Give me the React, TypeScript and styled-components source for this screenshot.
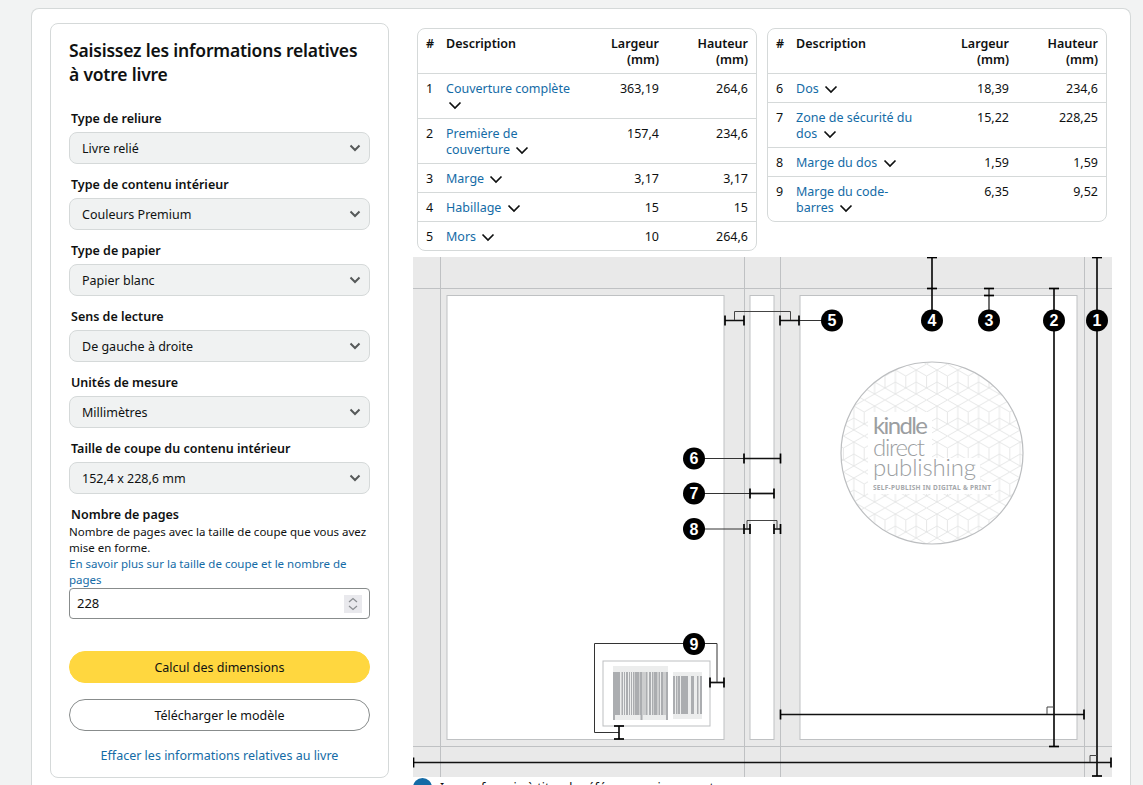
import React from 'react';
import styled, { createGlobalStyle } from 'styled-components';

const GlobalStyle = createGlobalStyle`
  html, body {
    margin: 0;
    height: 785px;
    overflow: hidden;
    background: #f2f3f3;
    color: #0f1111;
    font-family: "Noto Sans", "Liberation Sans", Arial, sans-serif;
    font-size: 13px;
  }
`;

// Page
const Card = styled.main`
  display: flex;
  align-items: flex-start;
  box-sizing: border-box;
  width: 1100px;
  height: 777px;
  margin: 8px 0 0 31px;
  padding: 14px 0 0 18px;
  background: #fff;
  border: 1px solid #d5d9d9;
  border-bottom: 0;
  border-radius: 8px 8px 0 0;
  overflow: hidden;
`;

// Form panel
const Panel = styled.section`
  box-sizing: border-box;
  flex: none;
  width: 339px;
  height: 755px;
  padding: 14px 18px 0;
  border: 1px solid #d5d9d9;
  border-radius: 8px;
`;

const Title = styled.h1`
  margin: 0 0 23px;
  font-size: 17.5px;
  line-height: 24px;
  font-weight: 600;
  letter-spacing: -0.2px;
`;

const Field = styled.div`
  margin-bottom: 11px;
`;

const Label = styled.label`
  display: block;
  margin: 0 0 4px 2px;
  font-size: 12.5px;
  line-height: 19px;
  font-weight: 600;
`;

const SelectBox = styled.div`
  display: flex;
  align-items: center;
  justify-content: space-between;
  box-sizing: border-box;
  height: 32px;
  padding: 0 8px 0 12px;
  background: #f0f2f2;
  border: 1px solid #d5d9d9;
  border-radius: 8px;
  font-size: 12.5px;
`;

const Help = styled.p`
  margin: -4px 0 0;
  font-size: 11.5px;
  line-height: 16px;
`;

const HelpLink = styled.a`
  display: block;
  color: #146ba6;
`;

const NumberBox = styled.div`
  position: relative;
  box-sizing: border-box;
  height: 31px;
  padding-left: 7px;
  border: 1px solid #888c8c;
  border-radius: 4px;
  font-size: 13px;
  line-height: 29px;
`;

const Spin = styled.span`
  position: absolute;
  top: 6px;
  right: 7px;
  display: flex;
  width: 18px;
  height: 18px;
  background: #e9e9ed;
`;

const Actions = styled.div`
  margin-top: 32px;
`;

const Button = styled.button<{ $primary?: boolean }>`
  display: block;
  box-sizing: border-box;
  width: 301px;
  height: 32px;
  margin: 0 0 16px;
  background: ${(p) => (p.$primary ? '#ffd73f' : '#fff')};
  border: 1px solid ${(p) => (p.$primary ? '#ffd73f' : '#888c8c')};
  border-radius: 16px;
  color: #0f1111;
  font: inherit;
  font-size: 12.5px;
`;

const ClearLink = styled.a`
  display: block;
  margin-top: 17px;
  text-align: center;
  color: #146ba6;
  font-size: 12.5px;
  line-height: 16px;
`;

// Right column
const Content = styled.section`
  flex: none;
  width: 699px;
  margin-left: 24px;
`;

const Tables = styled.div`
  display: flex;
  align-items: flex-start;
  gap: 10px;
  height: 227px;
  padding: 5px 0 0 4px;
  margin-bottom: 7px;
  box-sizing: border-box;
`;

const Wrap = styled.div`
  flex: none;
  width: 340px;
  box-sizing: border-box;
  border: 1px solid #d5d9d9;
  border-radius: 8px;
  overflow: hidden;
`;

const Table = styled.table`
  width: 100%;
  table-layout: fixed;
  border-collapse: collapse;
  font-size: 12.5px;
  line-height: 16px;

  tbody tr > * {
    border-top: 1px solid #d5d9d9;
  }
`;

const Th = styled.th<{ $w: number; $right?: boolean; $flush?: boolean }>`
  box-sizing: border-box;
  width: ${(p) => p.$w}px;
  padding: 7px 8px 5px ${(p) => (p.$flush ? 0 : 8)}px;
  text-align: ${(p) => (p.$right ? 'right' : 'left')};
  vertical-align: top;
  font-weight: 600;
`;

const Td = styled.td<{ $right?: boolean }>`
  padding: 7px 8px 5px;
  text-align: ${(p) => (p.$right ? 'right' : 'left')};
  vertical-align: top;
`;

const DescCell = styled(Td)`
  padding-left: 0;
  padding-right: 0;
`;

const RowLink = styled.a`
  color: #146ba6;
`;

const Tail = styled.span`
  white-space: nowrap;
`;

const Chevron = styled.svg`
  display: inline-block;
  width: 14px;
  height: 9px;
  margin-left: 2px;
  vertical-align: -1px;
`;

const Diagram = styled.svg`
  display: block;
  width: 699px;
  height: 520px;
`;

const Note = styled.div`
  display: flex;
  align-items: flex-start;
  gap: 8px;
  margin-top: 1px;
  font-size: 12.5px;
  line-height: 16px;
`;

const NoteText = styled.span`
  padding-top: 2px;
`;

const InfoDot = styled.span`
  flex: none;
  width: 19px;
  height: 19px;
  border-radius: 50%;
  background: #146ba6;
`;

const Badge = styled.text`
  fill: #fff;
  font-family: "Liberation Sans", Arial, sans-serif;
  font-size: 16px;
  font-weight: 700;
  text-anchor: middle;
`;

const LogoWord = styled.text`
  fill: #9b9ea1;
  font-family: Lato, "Noto Sans", sans-serif;
  font-size: 24px;
  font-weight: 300;
`;

const LogoBold = styled(LogoWord)`
  font-weight: 400;
`;

const LogoTag = styled.text`
  fill: #a5a8ab;
  font-family: "Noto Sans", sans-serif;
  font-size: 6.5px;
  font-weight: 700;
`;

// Data
type Row = { n: number; text: string; tail?: string; w: string; h: string };

const leftRows: Row[] = [
  { n: 1, text: 'Couverture complète', w: '363,19', h: '264,6' },
  { n: 2, text: 'Première de couverture', w: '157,4', h: '234,6' },
  { n: 3, text: 'Marge', w: '3,17', h: '3,17' },
  { n: 4, text: 'Habillage', w: '15', h: '15' },
  { n: 5, text: 'Mors', w: '10', h: '264,6' },
];

const rightRows: Row[] = [
  { n: 6, text: 'Dos', w: '18,39', h: '234,6' },
  { n: 7, text: 'Zone de sécurité du dos', w: '15,22', h: '228,25' },
  { n: 8, text: 'Marge du dos', w: '1,59', h: '1,59' },
  { n: 9, text: 'Marge du code-', tail: 'barres', w: '6,35', h: '9,52' },
];

const selects = [
  ['Type de reliure', 'Livre relié'],
  ['Type de contenu intérieur', 'Couleurs Premium'],
  ['Type de papier', 'Papier blanc'],
  ['Sens de lecture', 'De gauche à droite'],
  ['Unités de mesure', 'Millimètres'],
  ['Taille de coupe du contenu intérieur', '152,4 x 228,6 mm'],
];

const bars1 = [
  [613, 7], [621.5, 1.5], [624, 1], [626, 2], [629, 1], [631, 1], [633, 1.5], [635, 4.5], [640, 2.5],
  [643.5, 1], [645.5, 2], [649, 2], [652, 1.5], [654, 3.5], [658.5, 1.5], [661, 2.5], [664.5, 1], [666, 2],
];
const bars2 = [
  [673, 2], [676, 1.5], [678, 2], [681, 7], [691, 3], [697, 1.5], [700, 2],
];

const Caret = () => (
  <svg width="12" height="8" viewBox="0 0 12 8">
    <path d="M1.5 1.5 L6 6 L10.5 1.5" fill="none" stroke="#565959" strokeWidth="2" />
  </svg>
);

const RowChevron = () => (
  <Chevron viewBox="0 0 14 9">
    <path d="M1.5 1.5 L7 7 L12.5 1.5" fill="none" stroke="#0f1111" strokeWidth="1.7" />
  </Chevron>
);

const DimTable = ({ rows }: { rows: Row[] }) => (
  <Wrap>
    <Table>
      <thead>
        <tr>
          <Th $w={28}>#</Th>
          <Th $w={133} $flush>
            Description
          </Th>
          <Th $w={88} $right>
            Largeur (mm)
          </Th>
          <Th $w={89} $right>
            Hauteur (mm)
          </Th>
        </tr>
      </thead>
      <tbody>
        {rows.map((r) => (
          <tr key={r.n}>
            <Td>{r.n}</Td>
            <DescCell>
              <RowLink>{r.text}</RowLink>
              {r.tail ? (
                <Tail>
                  <RowLink>{r.tail}</RowLink> <RowChevron />
                </Tail>
              ) : (
                <>
                  {' '}
                  <RowChevron />
                </>
              )}
            </DescCell>
            <Td $right>{r.w}</Td>
            <Td $right>{r.h}</Td>
          </tr>
        ))}
      </tbody>
    </Table>
  </Wrap>
);

// Diagram parts, all in page coordinates through the viewBox
const Dot = ({ x, y, n }: { x: number; y: number; n: number }) => (
  <g>
    <circle cx={x} cy={y} r="11" fill="#000" />
    <Badge x={x} y={y + 5.8}>
      {n}
    </Badge>
  </g>
);

const HTick = ({ x, y, r = 5 }: { x: number; y: number; r?: number }) => (
  <line x1={x} x2={x} y1={y - r} y2={y + r} stroke="#000" strokeWidth="1.7" />
);

const VTick = ({ x, y, r = 5 }: { x: number; y: number; r?: number }) => (
  <line x1={x - r} x2={x + r} y1={y} y2={y} stroke="#000" strokeWidth="1.7" />
);

const Dim = ({ d, w = 1.7, c = '#111' }: { d: string; w?: number; c?: string }) => (
  <path d={d} fill="none" stroke={c} strokeWidth={w} />
);

const KdpLogo = () => (
  <g>
    <defs>
      <pattern id="cubes" width="20.8" height="36" patternUnits="userSpaceOnUse" x="1" y="4">
        <path
          d="M10.4 0 L20.8 6 V18 L10.4 24 L0 18 V6 Z M0 6 L10.4 12 L20.8 6 M10.4 12 V24 M0 18 V30 L10.4 36 M20.8 18 V30 L10.4 36 M0 30 L10.4 24 M20.8 30 L10.4 24"
          fill="none"
          stroke="#e3e4e4"
          strokeWidth="0.9"
        />
      </pattern>
    </defs>
    <circle cx="932" cy="453" r="91" fill="#fff" />
    <circle cx="932" cy="453" r="91" fill="url(#cubes)" stroke="#bcbec0" strokeWidth="1.2" />
    <rect x="868" y="412" width="64" height="50" fill="#fff" />
    <rect x="868" y="458" width="112" height="24" fill="#fff" />
    <rect x="868" y="482" width="127" height="12" fill="#fff" />
    <LogoBold x="873" y="434" textLength="55">
      kindle
    </LogoBold>
    <LogoWord x="873" y="456" textLength="52">
      direct
    </LogoWord>
    <LogoWord x="873" y="476" textLength="103">
      publishing
    </LogoWord>
    <LogoTag x="873" y="490" textLength="118">
      SELF-PUBLISH IN DIGITAL &amp; PRINT
    </LogoTag>
  </g>
);

const Barcode = () => (
  <g>
    <rect x="603" y="661" width="107" height="65" fill="#fff" stroke="#bdbfc1" strokeWidth="1" />
    <rect x="613" y="666" width="55" height="54" fill="#eceded" />
    <rect x="673" y="672" width="29" height="47" fill="#eceded" />
    {bars1.map(([x, w]) => (
      <rect key={x} x={x} y="672" width={w} height="43" fill="#abadb0" />
    ))}
    {[613, 640.5, 666].map((x) => (
      <rect key={x} x={x} y="715" width="2" height="5" fill="#abadb0" />
    ))}
    {bars2.map(([x, w]) => (
      <rect key={x} x={x} y="676" width={w} height="38" fill="#abadb0" />
    ))}
  </g>
);

const CoverDiagram = () => (
  <Diagram viewBox="413 257 699 520">
    <rect x="413" y="257" width="699" height="520" fill="#e9e9e9" />
    {[
      [447, 277],
      [750, 24],
      [800, 277],
    ].map(([x, w]) => (
      <rect key={x} x={x} y="295.5" width={w} height="444" fill="#fff" stroke="#bfc1c3" strokeWidth="1" />
    ))}
    <g stroke="#bfc1c3" strokeWidth="1">
      <line x1="413" x2="1112" y1="288.5" y2="288.5" />
      <line x1="413" x2="1112" y1="746.5" y2="746.5" />
      <line x1="440.5" x2="440.5" y1="257" y2="777" />
      <line x1="744.5" x2="744.5" y1="257" y2="777" />
      <line x1="780.5" x2="780.5" y1="257" y2="777" />
      <line x1="1084.5" x2="1084.5" y1="257" y2="777" />
    </g>

    <KdpLogo />
    <Barcode />

    {/* 1 full cover */}
    <Dim d="M1097 257 V776" />
    <VTick x={1097} y={257.5} />
    <VTick x={1097} y={776} />
    <Dim d="M413 762.5 H1111" />
    <HTick x={413.5} y={762.5} />
    <HTick x={1111} y={762.5} />
    <Dim d="M1090 762 V755.5 H1097" w={1} c="#444" />

    {/* 2 front cover */}
    <Dim d="M1054 288 V746" />
    <VTick x={1054} y={288.5} />
    <VTick x={1054} y={746.5} />
    <Dim d="M780 714.5 H1084" />
    <HTick x={780.5} y={714.5} />
    <HTick x={1084} y={714.5} />
    <Dim d="M1047 714 V707 H1054" w={1} c="#444" />

    {/* 3 and 4 */}
    <Dim d="M989 288 V320" w={1.2} />
    <VTick x={989} y={288.5} />
    <VTick x={989} y={295.5} />
    <Dim d="M932 257 V320" />
    <VTick x={932} y={257.5} />
    <VTick x={932} y={288.5} />

    {/* 5 */}
    <Dim d="M725 320.5 H744 M780 320.5 H799" />
    <Dim d="M799 320.5 H822" w={1} c="#333" />
    <HTick x={725} y={320.5} />
    <HTick x={744} y={320.5} />
    <HTick x={780} y={320.5} />
    <HTick x={799} y={320.5} />
    <Dim d="M734.5 320 V311.5 H790.5 V320" w={1} c="#444" />

    {/* 6, 7, 8 */}
    <Dim d="M694 458.5 H744" w={1} c="#333" />
    <Dim d="M744 458.5 H780" />
    <HTick x={744} y={458.5} />
    <HTick x={780.5} y={458.5} />
    <Dim d="M694 493.5 H750" w={1} c="#333" />
    <Dim d="M750 493.5 H774" />
    <HTick x={750} y={493.5} />
    <HTick x={774} y={493.5} />
    <Dim d="M694 529 H744" w={1} c="#333" />
    <Dim d="M744 529 H750 M774 529 H780" />
    <HTick x={744} y={529} />
    <HTick x={750} y={529} />
    <HTick x={774} y={529} />
    <HTick x={780.5} y={529} />
    <Dim d="M747 529 V520.5 H777 V529" w={1} c="#444" />

    {/* 9 */}
    <Dim d="M710 682.5 H724" />
    <HTick x={710} y={682.5} />
    <HTick x={724} y={682.5} />
    <Dim d="M717 682 V643.5 H594.5 V732.5 H619" w={1} c="#333" />
    <Dim d="M619 726 V739" />
    <VTick x={619} y={726} />
    <VTick x={619} y={739} />

    <Dot x={1097} y={320.5} n={1} />
    <Dot x={1054} y={320.5} n={2} />
    <Dot x={989} y={320.5} n={3} />
    <Dot x={932} y={320.5} n={4} />
    <Dot x={832} y={320.5} n={5} />
    <Dot x={694} y={458.5} n={6} />
    <Dot x={694} y={493.5} n={7} />
    <Dot x={694} y={529} n={8} />
    <Dot x={694} y={644} n={9} />
  </Diagram>
);

const App: React.FC = () => {
  return (
    <>
      <GlobalStyle />
      <Card>
        <Panel>
          <Title>Saisissez les informations relatives à votre livre</Title>
          {selects.map(([label, value]) => (
            <Field key={label}>
              <Label>{label}</Label>
              <SelectBox>
                {value}
                <Caret />
              </SelectBox>
            </Field>
          ))}
          <Field>
            <Label>Nombre de pages</Label>
            <Help>
              Nombre de pages avec la taille de coupe que vous avez mise en forme.
              <HelpLink>En savoir plus sur la taille de coupe et le nombre de pages</HelpLink>
            </Help>
            <NumberBox>
              228
              <Spin>
                <svg width="18" height="18" viewBox="0 0 18 18">
                  <path d="M5 7 L9 3.5 L13 7 M5 11 L9 14.5 L13 11" fill="none" stroke="#8a8d91" strokeWidth="1.2" />
                </svg>
              </Spin>
            </NumberBox>
          </Field>
          <Actions>
            <Button $primary>Calcul des dimensions</Button>
            <Button>Télécharger le modèle</Button>
          </Actions>
          <ClearLink>Effacer les informations relatives au livre</ClearLink>
        </Panel>
        <Content>
          <Tables>
            <DimTable rows={leftRows} />
            <DimTable rows={rightRows} />
          </Tables>
          <CoverDiagram />
          <Note>
            <InfoDot />
            <NoteText>Image fournie à titre de référence uniquement</NoteText>
          </Note>
        </Content>
      </Card>
    </>
  );
};

export default App;
